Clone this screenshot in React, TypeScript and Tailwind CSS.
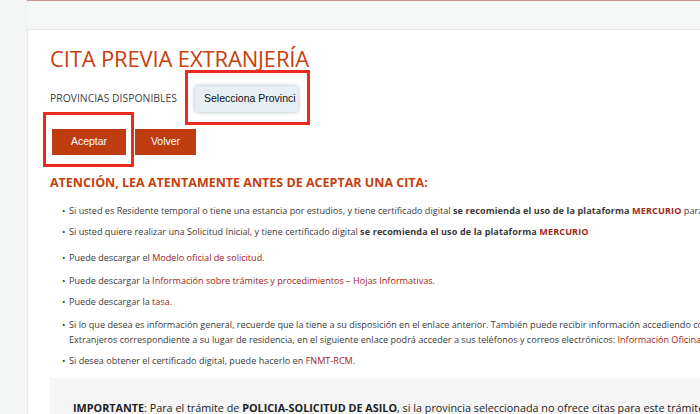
export default function App() {
  const body = "font-['Open_Sans',sans-serif]";
  return (
    <div className={`w-[700px] h-[414px] overflow-hidden bg-[#f4f5f5] ${body}`}>
      <div className="pl-[27px]">
        <div className="w-[1100px] h-[29px] border-t border-[#c09593] bg-[#f5f6f6] shadow-[0_1px_1px_rgba(0,0,0,0.06)]" />
        <div className="w-[1100px] h-[400px] bg-white border-l border-t border-[#e8e9e9] pl-[22px]">
          <h1 className="pt-[14px] text-[22px] leading-[28px] text-[#c8400d] tracking-[-0.15px]">
            CITA PREVIA EXTRANJERÍA
          </h1>
          <div className="mt-[14px] flex items-center h-[26px]">
            <span className="text-[10.4px] text-[#444] w-[145px]">PROVINCIAS DISPONIBLES</span>
            <div className="relative">
              <div className="w-[103px] h-[26px] rounded-[3px] bg-[#e6eff3] shadow-[0_0_4px_rgba(60,100,120,0.45)] pl-[9px] overflow-hidden flex items-center font-['Liberation_Sans',sans-serif] text-[10.5px] text-[#111] whitespace-nowrap">
                <span className="w-[92px] overflow-hidden">Selecciona Provincia</span>
              </div>
              <div className="absolute left-[-10px] right-[-12px] top-[-16px] bottom-[-13px] border-[3px] border-[#ee2a1f]" />
            </div>
          </div>
          <div className="mt-[17px] flex gap-[9px] ml-[2px] font-['Liberation_Sans',sans-serif] text-[10.5px] text-white">
            <div className="relative">
              <div className="w-[74px] h-[26px] bg-[#bf3b10] flex items-center justify-center">Aceptar</div>
              <div className="absolute left-[-9px] right-[-8px] top-[-17px] bottom-[-12px] border-[3px] border-[#ee2a1f]" />
            </div>
            <div className="w-[61px] h-[26px] bg-[#bf3b10] flex items-center justify-center">Volver</div>
          </div>
          <h2 className="mt-[20px] text-[12.5px] leading-[16px] font-bold text-[#c8400d]">
            ATENCIÓN, LEA ATENTAMENTE ANTES DE ACEPTAR UNA CITA:
          </h2>
          <ul className="mt-[12px] ml-[12px] text-[9.1px] leading-[15px] text-[#3a3a3a] whitespace-nowrap">
            <li className="mb-[6px] flex"><span className="w-[7px]">•</span><span>Si usted es Residente temporal o tiene una estancia por estudios, y tiene certificado digital <b className="tracking-[0.1px]">se recomienda el uso de la plataforma <span className="text-[#a02a17]">MERCURIO</span></b> para realizar su solicitud.</span></li>
            <li className="mb-[11px] flex"><span className="w-[7px]">•</span><span>Si usted quiere realizar una Solicitud Inicial, y tiene certificado digital <b className="tracking-[0.1px]">se recomienda el uso de la plataforma <span className="text-[#a02a17]">MERCURIO</span></b></span></li>
            <li className="mb-[8px] flex"><span className="w-[7px]">•</span><span>Puede descargar el <span className="text-[#9b2418]">Modelo oficial de solicitud.</span></span></li>
            <li className="mb-[6px] flex"><span className="w-[7px]">•</span><span>Puede descargar la <span className="text-[#9b2418]">Información sobre trámites y procedimientos – Hojas Informativas.</span></span></li>
            <li className="mb-[8px] flex"><span className="w-[7px]">•</span><span>Puede descargar la <span className="text-[#9b2418]">tasa.</span></span></li>
            <li className="mb-[6px] flex"><span className="w-[7px]">•</span><span>Si lo que desea es información general, recuerde que la tiene a su disposición en el enlace anterior. También puede recibir información accediendo con cita a la Oficina de<br />Extranjeros correspondiente a su lugar de residencia, en el siguiente enlace podrá acceder a sus teléfonos y correos electrónicos: <span className="text-[#9b2418]">Información Oficinas de Extranjería.</span></span></li>
            <li className="flex"><span className="w-[7px]">•</span><span>Si desea obtener el certificado digital, puede hacerlo en <span className="text-[#9b2418]">FNMT-RCM</span>.</span></li>
          </ul>
          <div className="mt-[10px] bg-[#f5f5f5] h-[80px] pl-[23px] pt-[22px] text-[10.8px] text-[#222] whitespace-nowrap">
            <b>IMPORTANTE</b>: Para el trámite de <b>POLICIA-SOLICITUD DE ASILO</b>, si la provincia seleccionada no ofrece citas para este trámite
          </div>
        </div>
      </div>
    </div>
  );
}
